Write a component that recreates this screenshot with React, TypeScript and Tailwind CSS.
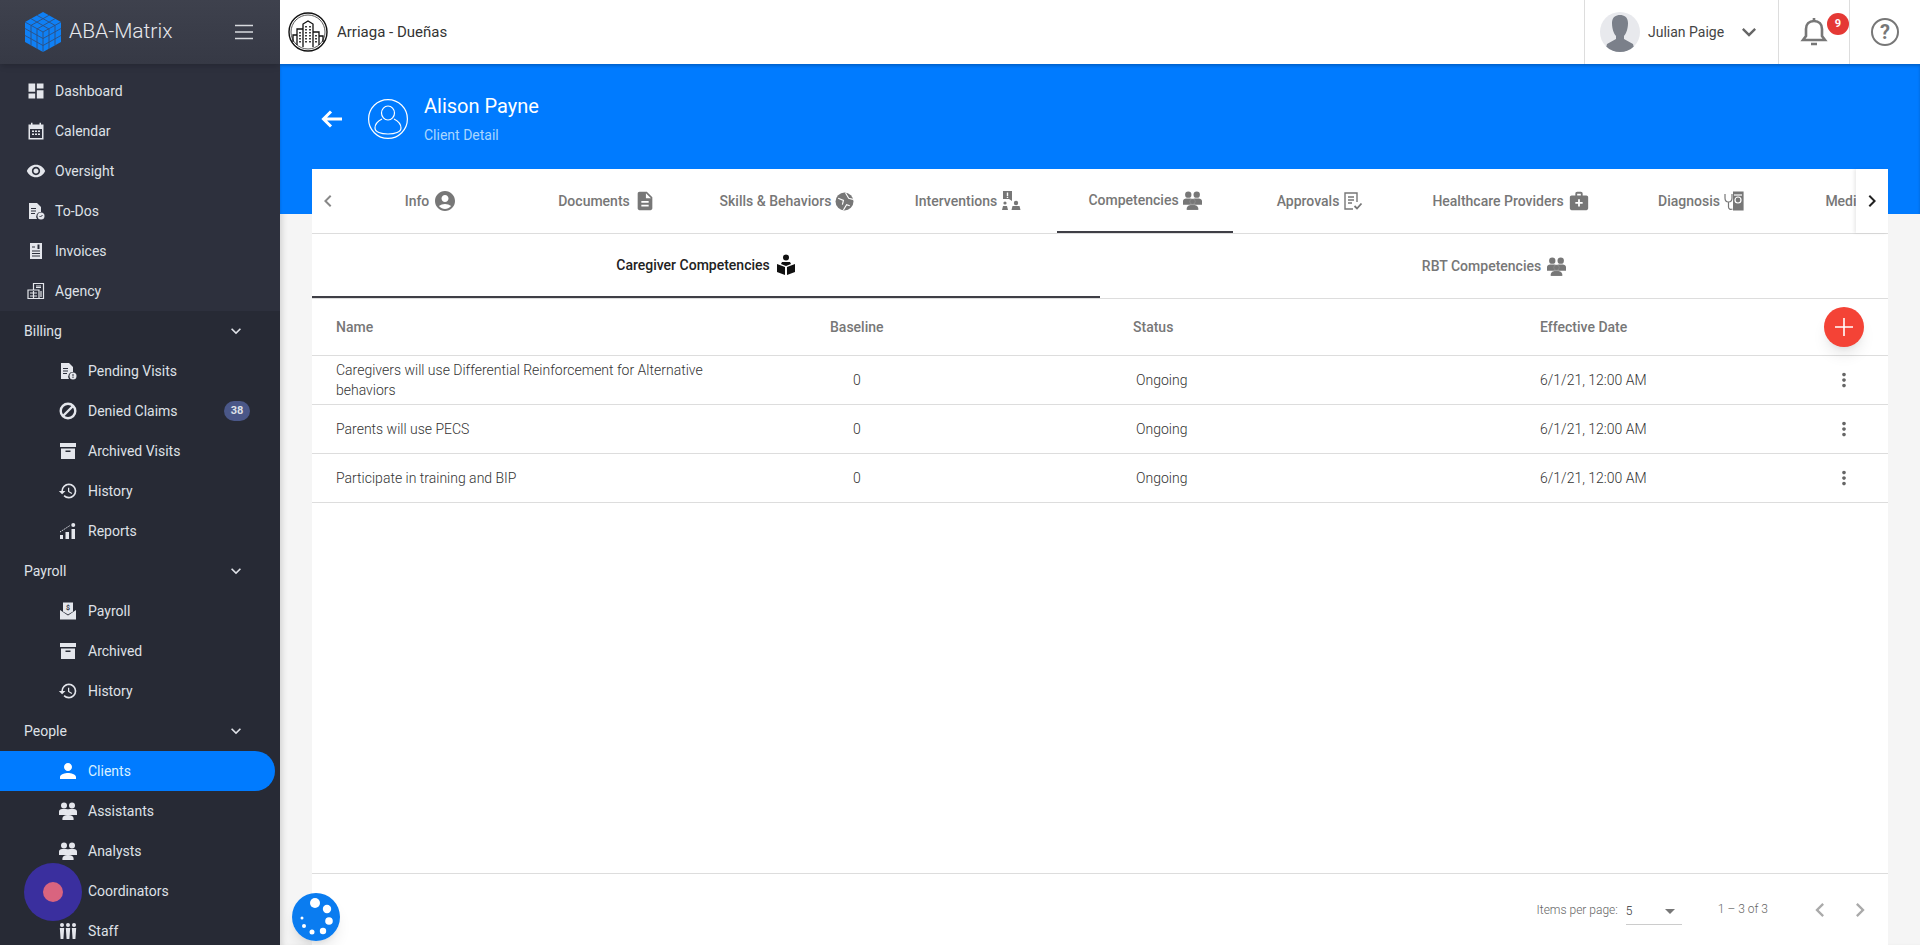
import type { ReactNode } from "react";
import {
  MdDashboard,
  MdVisibility,
  MdHistory,
  MdKeyboardArrowDown,
  MdChevronLeft,
  MdChevronRight,
  MdMoreVert,
  MdArrowDropDown,
  MdAccountCircle,
  MdDescription,
  MdPerson,
  MdMedicalServices,
} from "react-icons/md";

function CubeLogo() {
  return (
    <svg viewBox="0 0 36 40" className="w-9 h-10 shrink-0">
      <path d="M18 0 36 10v20L18 40 0 30V10z" fill="#0f80f5" />
      <g stroke="#2f4f80" strokeWidth="0.9" fill="none">
        <path d="M0 10 18 20 36 10M18 20v20" />
        <path d="M6 6.700 24 17M12 3.300 30 13.400M30 6.700 12 17M24 3.300 6 13.400" />
        <path d="M6 13.400v20M12 17v20M24 17v20M30 13.400v20" />
        <path d="M0 16.500 18 26.500 36 16.500M0 23.500 18 33.500 36 23.500" />
      </g>
    </svg>
  );
}

function BuildingLogo() {
  return (
    <svg viewBox="0 0 40 40" className="w-10 h-10 shrink-0" fill="none" stroke="#111">
      <circle cx="20" cy="20" r="19" strokeWidth="1.400" />
      <circle cx="20" cy="20" r="17" strokeWidth="0.700" />
      <path d="M15 35V12l5-3 5 3v23M9 33V17h6M25 20h6v13M5 30v-7h4M31 24h4v6" strokeWidth="1.300" />
      <path d="M18 14v18M22 14v18M12 20v11M28 23v8" strokeWidth="1.600" strokeDasharray="1.600 1.400" />
    </svg>
  );
}

function CalendarIcon() {
  return (
    <svg viewBox="0 0 18 18" className="w-[18px] h-[18px]" fill="#e4e6ec">
      <path d="M1.500 2.500h2.500V.8h1.500v1.700h7V.8H14v1.700h2.500V17.500h-15zM3 7v9h12V7z" />
      <path d="M5 8.500h2V10H5zM8 8.500h2V10H8zM11 8.500h2V10h-2zM5 11.500h2V13H5zM8 11.500h2V13H8zM11 11.500h2V13h-2z" />
    </svg>
  );
}

function DocBadgeIcon({ mark }: { mark?: boolean }) {
  return (
    <svg viewBox="0 0 18 18" className="w-[18px] h-[18px]" fill="#e4e6ec">
      <path d="M2 1h8l4 4v5a4.500 4.500 0 0 0-4 7H2z" />
      <path d="M4 6h5v1H4zM4 8.500h5v1H4zM4 11h4v1H4z" fill="#2d303d" />
      <circle cx="14" cy="14" r="3.500" />
      {mark ? (
        <path d="M13.500 12h1v2.500h-1zM13.500 15h1v1h-1z" fill="#2d303d" />
      ) : (
        <path d="m12.500 14 1 1 2-2" stroke="#2d303d" fill="none" />
      )}
    </svg>
  );
}

function InvoiceIcon() {
  return (
    <svg viewBox="0 0 18 18" className="w-[18px] h-[18px]" fill="#e4e6ec">
      <path d="M3 1h12v16H3z" />
      <path d="M5 4.500h3v1H5zM5 8.500h8v1H5zM5 11h8v1H5zM5 13.500h8v1H5zM10.500 2.500h2v4.500h-2z" fill="#2d303d" />
    </svg>
  );
}

function AgencyIcon() {
  return (
    <svg viewBox="0 0 18 18" className="w-[18px] h-[18px]" fill="none" stroke="#e4e6ec" strokeWidth="1.200">
      <path d="M6.500 8V1.500h10v15H1V8h11v8.500" />
      <path d="M9 4h5M9 5.500h5M3 11h7M3 14h7M6.500 9v7M14 9v6" />
    </svg>
  );
}

function ReportsIcon() {
  return (
    <svg viewBox="0 0 18 18" className="w-[18px] h-[18px]" fill="#e4e6ec">
      <path d="M1 13h3v4H1zM6.500 10h3.500v7H6.500zM12.500 7H16v10h-3.500z" />
      <circle cx="14.250" cy="3" r="2" />
      <path d="M1 10 11 3.500" stroke="#e4e6ec" strokeDasharray="1.500 1" />
    </svg>
  );
}

function PayrollIcon() {
  return (
    <svg viewBox="0 0 18 18" className="w-[18px] h-[18px]" fill="#e4e6ec">
      <path d="M4 .5h10v9l-5 3-5-3z" />
      <path d="M1 8v9.500h16V8l-8 5.500z" />
      <text x="9" y="8" fontSize="7" fontWeight="700" textAnchor="middle" fill="#2d303d">
        $
      </text>
    </svg>
  );
}

function BoxIcon() {
  return (
    <svg viewBox="0 0 18 18" className="w-[18px] h-[18px]" fill="#e4e6ec">
      <path d="M1 1h16v4H1zM2 6.500h14V17H2z" />
      <path d="M6.500 8.500h5V10h-5z" fill="#272a35" />
    </svg>
  );
}

function BlockIcon() {
  return (
    <svg viewBox="0 0 18 18" className="w-[18px] h-[18px]" fill="none" stroke="#e4e6ec" strokeWidth="2.400">
      <circle cx="9" cy="9" r="7.300" />
      <path d="M4 14 14 4" />
    </svg>
  );
}

function GroupIcon({ fill, size }: { fill: string; size: string }) {
  return (
    <svg viewBox="0 0 18 18" className={size} fill={fill}>
      <circle cx="5" cy="3.500" r="3" />
      <circle cx="13" cy="3.500" r="3" />
      <path d="M0 13V9.500C0 8 1.500 7 3 7h4c.8 0 1.500.3 2 .8.500-.5 1.200-.8 2-.8h4c1.500 0 3 1 3 2.500V13z" />
      <circle cx="9" cy="10" r="2.600" stroke="#fff" strokeOpacity="0.25" strokeWidth="0.5" />
      <path d="M3.500 18v-1.500c0-2 2-3.500 5.500-3.500s5.500 1.500 5.500 3.500V18z" stroke="#fff" strokeOpacity="0.25" strokeWidth="0.5" />
    </svg>
  );
}

function StaffIcon() {
  return (
    <svg viewBox="0 0 18 18" className="w-[18px] h-[18px]" fill="#e4e6ec">
      <circle cx="3" cy="3" r="2" />
      <circle cx="9" cy="3" r="2" />
      <circle cx="15" cy="3" r="2" />
      <path d="M.8 6h4.400l-.8 11H1.600zM6.800 6h4.400l-.8 11H7.600zM12.800 6h4.400l-.8 11h-2.800z" />
    </svg>
  );
}

function GlobeIcon() {
  return (
    <svg viewBox="0 0 18 18" className="w-[19px] h-[19px]" fill="#777">
      <circle cx="9" cy="9" r="8.500" />
      <path d="M3 6l5 2-1 4M10 1l3 5 4 1M8 17l3-5 3 1" stroke="#fff" fill="none" strokeWidth="1.100" />
    </svg>
  );
}

function InterventionIcon() {
  return (
    <svg viewBox="0 0 20 20" className="w-5 h-5" fill="#777">
      <path d="M2 0h9v10L8 8H2z" />
      <path d="M5.800 1.500h1.400v3.500H5.800zM5.800 5.800h1.400v1.200H5.800z" fill="#fff" />
      <circle cx="4" cy="12" r="1.600" />
      <path d="M1 19l1-4h4l1 4z" />
      <circle cx="15" cy="12" r="2.200" />
      <path d="M10.500 19l1-4h7l1 4z" />
    </svg>
  );
}

function ApprovalIcon() {
  return (
    <svg viewBox="0 0 20 20" className="w-5 h-5" fill="none" stroke="#777" strokeWidth="1.400">
      <path d="M10 18H2V2h12v9M5 6h6M5 9h6M5 12h4" />
      <path d="m11.500 15 2.500 2.500 4.500-5" strokeWidth="1.800" />
    </svg>
  );
}

function DiagnosisIcon() {
  return (
    <svg viewBox="0 0 20 20" className="w-5 h-5" fill="none" stroke="#777" strokeWidth="1.200">
      <path d="M1 3v4c0 3 2 4 3.500 4S8 10 8 7V3M4.500 11v5c0 2 2 3 4 2" />
      <path d="M9 1h10v18H9" fill="#777" />
      <circle cx="14" cy="9" r="3" stroke="#fff" />
      <path d="M10 4h8" stroke="#fff" />
    </svg>
  );
}

function ReaderIcon() {
  return (
    <svg viewBox="0 0 20 22" className="w-5 h-[22px]" fill="#111">
      <circle cx="10" cy="3.500" r="3" />
      <path d="M6 8h8l1 2-5 2-5-2z" />
      <path d="M1 10l8 3v8l-8-3zM19 10l-8 3v8l8-3z" />
    </svg>
  );
}

function PaletteDots() {
  return (
    <svg viewBox="0 0 48 48" className="w-12 h-12">
      <circle cx="24" cy="24" r="24" fill="#0a7cf0" />
      <g fill="#fff">
        <circle cx="23" cy="10" r="5" />
        <circle cx="35" cy="16" r="4.200" />
        <circle cx="37" cy="28" r="3.800" />
        <circle cx="31" cy="38" r="3.200" />
        <circle cx="20" cy="39" r="2.500" />
        <circle cx="12" cy="33" r="2" />
        <circle cx="10" cy="25" r="1.500" />
      </g>
    </svg>
  );
}

const iconClass = "w-[20px] h-[20px] text-[#e4e6ec]";

function NavRow({
  icon,
  label,
  sub,
  active,
  badge,
}: {
  icon: ReactNode;
  label: string;
  sub?: boolean;
  active?: boolean;
  badge?: string;
}) {
  return (
    <div
      className={`h-10 shrink-0 flex items-center text-sm ${sub ? "pl-14" : "pl-6"} ${
        active ? "bg-[#007bff] text-[#d9f1ff] rounded-r-full mr-[5px]" : "text-[#dfe1e7]"
      }`}
    >
      <span className="w-6 h-6 flex items-center justify-center shrink-0">{icon}</span>
      <span className={sub ? "ml-2" : "ml-[7px]"}>{label}</span>
      {badge && (
        <span className="ml-auto mr-[30px] w-[26px] h-5 rounded-full bg-[#4a5788] text-[11px] font-bold flex items-center justify-center">
          {badge}
        </span>
      )}
    </div>
  );
}

function NavGroup({ label }: { label: string }) {
  return (
    <div className="h-10 shrink-0 flex items-center justify-between pl-6 pr-[34px] text-sm text-[#dfe1e7]">
      <span>{label}</span>
      <MdKeyboardArrowDown className="w-5 h-5" />
    </div>
  );
}

function Sidebar() {
  return (
    <aside className="w-[280px] shrink-0 h-full flex flex-col bg-[#272a35] overflow-hidden z-20">
      <div className="h-16 shrink-0 flex items-center pl-[25px] pr-[26px] bg-gradient-to-b from-[#3e414d] to-[#363945] shadow-md z-10">
        <CubeLogo />
        <span className="ml-2 text-[21px] font-light text-[#e8e9ed]">ABA-Matrix</span>
        <svg viewBox="0 0 20 16" className="ml-auto w-5 h-4" stroke="#d8dade" strokeWidth="1.500">
          <path d="M1 1.500h18M1 8h18M1 14.500h18" />
        </svg>
      </div>
      <div className="shrink-0 bg-[#2d303d] pt-[7px]">
        <NavRow icon={<MdDashboard className={iconClass} />} label="Dashboard" />
        <NavRow icon={<CalendarIcon />} label="Calendar" />
        <NavRow icon={<MdVisibility className={iconClass} />} label="Oversight" />
        <NavRow icon={<DocBadgeIcon />} label="To-Dos" />
        <NavRow icon={<InvoiceIcon />} label="Invoices" />
        <NavRow icon={<AgencyIcon />} label="Agency" />
      </div>
      <NavGroup label="Billing" />
      <NavRow sub icon={<DocBadgeIcon mark />} label="Pending Visits" />
      <NavRow sub icon={<BlockIcon />} label="Denied Claims" badge="38" />
      <NavRow sub icon={<BoxIcon />} label="Archived Visits" />
      <NavRow sub icon={<MdHistory className={iconClass} />} label="History" />
      <NavRow sub icon={<ReportsIcon />} label="Reports" />
      <NavGroup label="Payroll" />
      <NavRow sub icon={<PayrollIcon />} label="Payroll" />
      <NavRow sub icon={<BoxIcon />} label="Archived" />
      <NavRow sub icon={<MdHistory className={iconClass} />} label="History" />
      <NavGroup label="People" />
      <NavRow sub active icon={<MdPerson className="w-7 h-7 text-white" />} label="Clients" />
      <NavRow sub icon={<GroupIcon fill="#e4e6ec" size="w-[18px] h-[18px]" />} label="Assistants" />
      <NavRow sub icon={<GroupIcon fill="#e4e6ec" size="w-[18px] h-[18px]" />} label="Analysts" />
      <NavRow sub icon={<GroupIcon fill="#e4e6ec" size="w-[18px] h-[18px]" />} label="Coordinators" />
      <NavRow sub icon={<StaffIcon />} label="Staff" />
    </aside>
  );
}

function TopBar() {
  return (
    <header className="h-16 shrink-0 bg-white flex items-stretch z-10">
      <div className="flex items-center pl-2 flex-1">
        <BuildingLogo />
        <span className="ml-[9px] text-[15px] text-[#333]">Arriaga - Dueñas</span>
      </div>
      <div className="w-[194px] border-l border-[#ddd] flex items-center pl-[15px]">
        <div className="w-10 h-10 rounded-full bg-[#e8e9ed] overflow-hidden flex items-center justify-center">
          <svg viewBox="0 0 40 40" className="w-10 h-10" fill="#7b808a">
            <path d="M12 11c0-6 4-8 8-8s8 2 8 8-2 11-4 13v3l9 5 2 8H5l2-8 9-5v-3c-2-2-4-7-4-13z" />
          </svg>
        </div>
        <span className="ml-[8px] text-sm text-[#444]">Julian Paige</span>
        <MdKeyboardArrowDown className="ml-[11px] w-7 h-7 text-[#666]" />
      </div>
      <div className="w-[71px] border-l border-[#ddd] relative">
        <svg viewBox="0 0 28 30" className="absolute left-[21px] top-[17px] w-[28px] h-[30px]" fill="none" stroke="#777" strokeWidth="2.600">
          <path d="M3 23h22l-3-4v-7c0-5-3-8-8-8s-8 3-8 8v7z" />
          <path d="M14 1v3M11 27h6" />
        </svg>
        <span className="absolute left-[48px] top-[13px] w-[22px] h-[22px] rounded-full bg-[#e53935] text-white text-[11px] font-bold flex items-center justify-center">
          9
        </span>
      </div>
      <div className="w-[71px] border-l border-[#ddd] flex items-center justify-center">
        <span className="w-7 h-7 rounded-full border-2 border-[#777] text-[#777] text-xl font-bold flex items-center justify-center">
          ?
        </span>
      </div>
    </header>
  );
}

const tabs = [
  { label: "Info", width: "w-[176px]", icon: <MdAccountCircle className="w-[24px] h-[24px]" /> },
  { label: "Documents", width: "w-[176px]", icon: <MdDescription className="w-[22px] h-[24px]" /> },
  { label: "Skills & Behaviors", width: "w-[184px]", icon: <GlobeIcon /> },
  { label: "Interventions", width: "w-[178px]", icon: <InterventionIcon /> },
  { label: "Competencies", width: "w-[176px]", icon: <GroupIcon fill="#777" size="w-[19px] h-[19px]" />, active: true },
  { label: "Approvals", width: "w-[174px]", icon: <ApprovalIcon /> },
  { label: "Healthcare Providers", width: "w-[208px]", icon: <MdMedicalServices className="w-[22px] h-[22px]" /> },
  { label: "Diagnosis", width: "w-[172px]", icon: <DiagnosisIcon /> },
  { label: "Medications", width: "w-[154px]", icon: null },
];

function TabStrip() {
  return (
    <div className="h-[65px] shrink-0 flex border-b border-[#ddd]">
      <div className="w-[31px] shrink-0 flex items-center justify-center">
        <MdChevronLeft className="w-6 h-6 text-[#888]" />
      </div>
      <div className="flex-1 flex overflow-hidden">
        {tabs.map((tab) => (
          <div
            key={tab.label}
            className={`${tab.width} shrink-0 h-[64px] flex items-center justify-center gap-1 text-sm font-medium text-[#777] ${
              tab.active ? "border-b-2 border-[#3f3f46]" : ""
            }`}
          >
            {tab.label}
            {tab.icon}
          </div>
        ))}
      </div>
      <div className="w-8 shrink-0 flex items-center justify-center bg-white shadow-[-2px_0_3px_rgba(0,0,0,0.08)] z-10">
        <MdChevronRight className="w-6 h-6 text-[#222]" />
      </div>
    </div>
  );
}

function SubTabs() {
  return (
    <div className="h-[65px] shrink-0 grid grid-cols-2 border-b border-[#ddd]">
      <div className="h-[64px] flex items-center justify-center gap-[6px] text-sm font-medium text-[#222] border-b-2 border-[#3f3f46]">
        Caregiver Competencies
        <ReaderIcon />
      </div>
      <div className="h-[64px] flex items-center justify-center gap-[6px] text-sm font-medium text-[#777]">
        RBT Competencies
        <GroupIcon fill="#777" size="w-[19px] h-[19px]" />
      </div>
    </div>
  );
}

const rowGrid = "grid grid-cols-[494px_303px_407px_1fr_64px] items-center pl-6 border-b border-[#ddd]";

const rows = [
  "Caregivers will use Differential Reinforcement for Alternative behaviors",
  "Parents will use PECS",
  "Participate in training and BIP",
];

function CompetencyTable() {
  return (
    <div className="flex-1 min-h-0">
      <div className={`${rowGrid} h-[57px] text-sm font-medium text-[#777]`}>
        <span>Name</span>
        <span>Baseline</span>
        <span>Status</span>
        <span>Effective Date</span>
        <span className="relative h-10">
          <span className="absolute left-0 top-0 w-10 h-10 rounded-full bg-[#f44336] shadow-lg flex items-center justify-center">
            <svg viewBox="0 0 20 20" className="w-5 h-5" stroke="#fff" strokeWidth="1.600">
              <path d="M10 1v18M1 10h18" />
            </svg>
          </span>
        </span>
      </div>
      {rows.map((name) => (
        <div key={name} className={`${rowGrid} h-[49px] text-sm font-light text-[#333]`}>
          <span className="max-w-[400px] leading-5">{name}</span>
          <span className="pl-[23px]">0</span>
          <span className="pl-[3px]">Ongoing</span>
          <span>6/1/21, 12:00 AM</span>
          <MdMoreVert className="ml-[9px] w-[22px] h-[22px] text-[#666]" />
        </div>
      ))}
    </div>
  );
}

function Pagination() {
  return (
    <footer className="h-[72px] shrink-0 border-t border-[#ddd] flex items-center justify-end text-xs font-light text-[#666]">
      <span>Items per page:</span>
      <div className="ml-2 w-14 h-7 mt-[3px] flex items-center justify-between border-b border-[#ccc] text-[#333]">
        5
        <MdArrowDropDown className="w-6 h-6 text-[#777]" />
      </div>
      <span className="ml-9 -mt-[2px]">1 – 3 of 3</span>
      <MdChevronLeft className="ml-[38px] w-7 h-7 text-[#aaa]" />
      <MdChevronRight className="ml-3 mr-[14px] w-7 h-7 text-[#aaa]" />
    </footer>
  );
}

export default function App() {
  return (
    <div className="relative flex h-[945px] w-[1920px] overflow-hidden bg-[#f5f5f5] font-['Roboto',sans-serif]">
      <Sidebar />
      <main className="flex-1 min-w-0 flex flex-col shadow-[inset_6px_0_6px_-4px_rgba(0,0,0,0.15)]">
        <TopBar />
        <section className="h-[150px] shrink-0 bg-[#007bff] flex items-start pl-[40px] pt-[35px] text-white shadow-[inset_0_2px_3px_rgba(0,0,0,0.2)]">
          <svg viewBox="0 0 24 24" className="mt-2 w-6 h-6" fill="none" stroke="#fff" strokeWidth="3">
            <path d="M22 12H4M11 4.500 3.500 12l7.500 7.500" />
          </svg>
          <svg viewBox="0 0 40 40" className="ml-[24px] w-10 h-10" fill="none" stroke="#fff" strokeWidth="1.200">
            <circle cx="20" cy="20" r="19.400" />
            <ellipse cx="20" cy="14" rx="6.500" ry="7" />
            <path d="M14 20c-4 2-7 5-7 9 0 4 6 6 13 6s13-2 13-6c0-4-3-7-7-9" />
          </svg>
          <div className="ml-[16px] -mt-[7px]">
            <div className="text-xl leading-7">Alison Payne</div>
            <div className="text-sm text-[#a8d6ff] mt-[5px]">Client Detail</div>
          </div>
        </section>
        <section className="flex-1 min-h-0 ml-8 mr-8 -mt-[45px] bg-white flex flex-col z-10">
          <TabStrip />
          <SubTabs />
          <CompetencyTable />
          <Pagination />
        </section>
      </main>
      <div className="absolute left-6 top-[863px] w-[58px] h-[58px] rounded-full bg-[#3a2f9e] flex items-center justify-center z-30">
        <span className="w-5 h-5 rounded-full bg-[#d9647f]" />
      </div>
      <div className="absolute left-[292px] top-[893px] w-12 h-12 rounded-full shadow-lg z-30">
        <PaletteDots />
      </div>
    </div>
  );
}
